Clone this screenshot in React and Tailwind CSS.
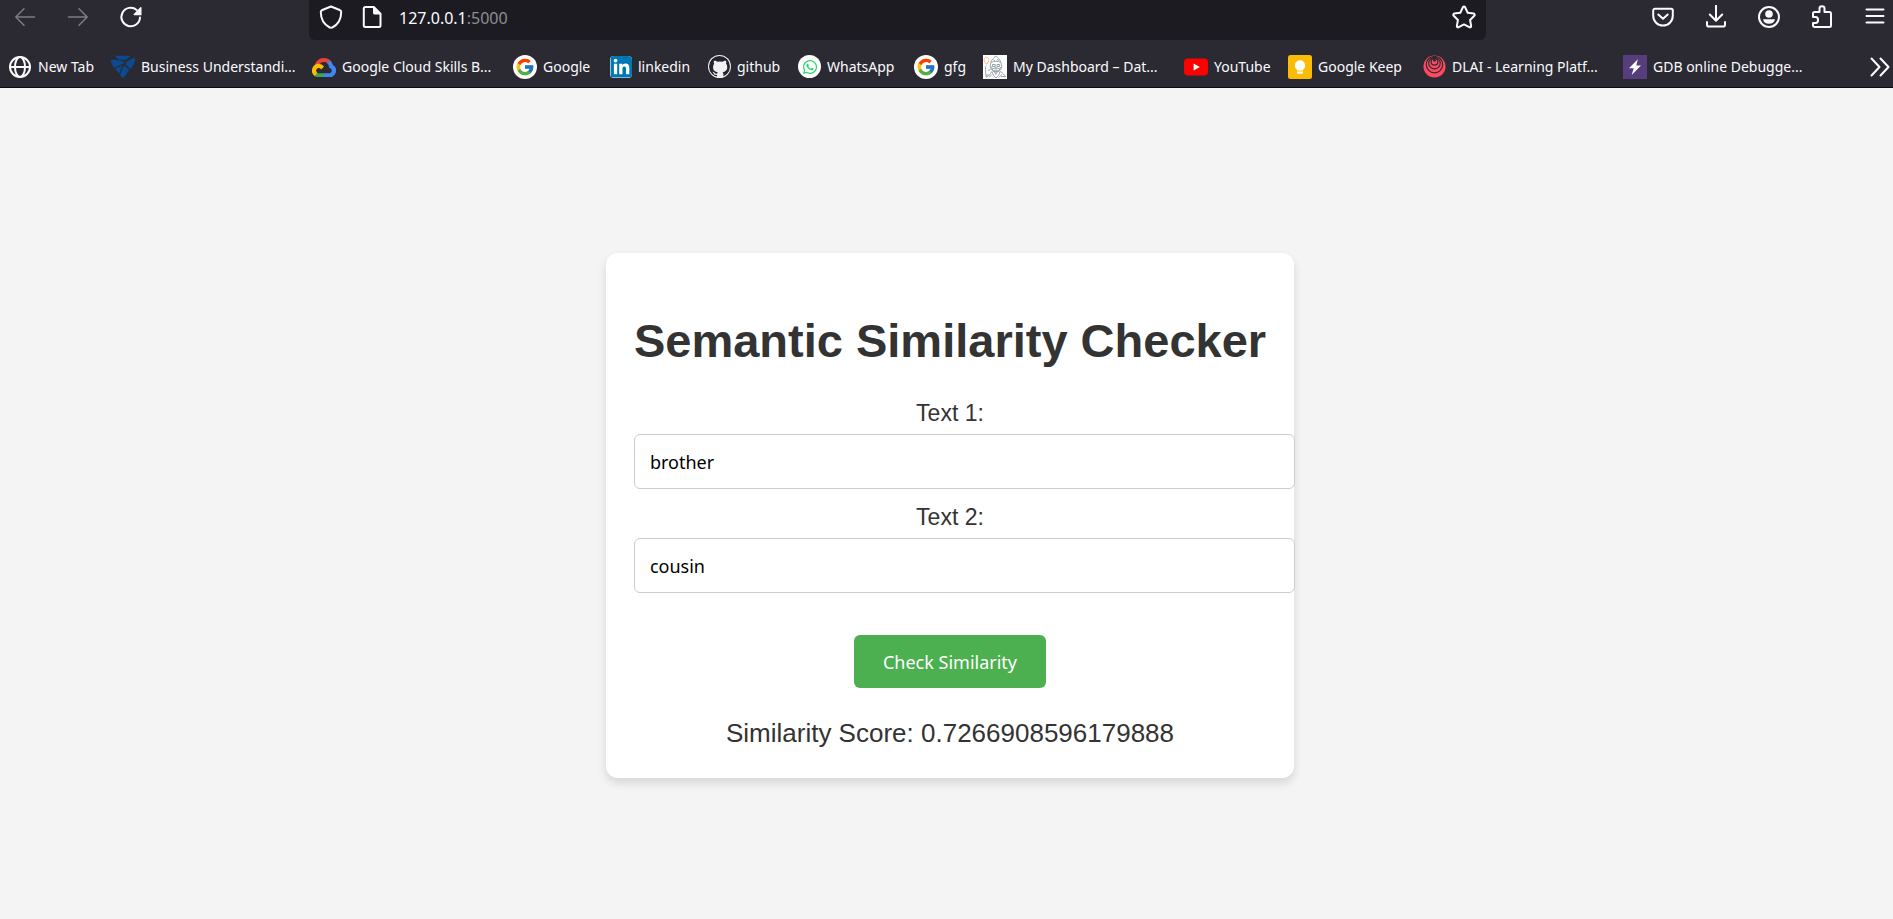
import { useState } from "react";
import { FcGoogle } from "react-icons/fc";
import { FaLinkedin, FaWhatsapp } from "react-icons/fa";

const line = {
  fill: "none",
  stroke: "currentColor",
  strokeWidth: 2,
  strokeLinecap: "round",
  strokeLinejoin: "round",
};

function Icon({ children, className = "size-6" }) {
  return (
    <svg viewBox="0 0 24 24" className={`block shrink-0 ${className}`} aria-hidden="true" {...line}>
      {children}
    </svg>
  );
}

const BackIcon = () => (
  <Icon>
    <path strokeWidth="1.5" d="M21.5 12H3M11 3.7 2.8 12l8.2 8.3" />
  </Icon>
);

const ForwardIcon = () => (
  <Icon>
    <path strokeWidth="1.5" d="M2.5 12H21M13 3.7 21.2 12 13 20.300" />
  </Icon>
);

const ReloadIcon = () => (
  <Icon>
    <path d="M21 12.500a9.300 9.300 0 1 1-3.300-7.600" />
    <path fill="currentColor" stroke="none" d="M22.500 2.800v7.400h-7.200c-.7 0-1-.8-.5-1.200l6.500-6.700c.500-.5 1.200-.2 1.200.5z" />
  </Icon>
);

const ShieldIcon = () => (
  <Icon>
    <path d="M12 1.500 3.300 5c-1 .4-1.500 1-1.500 2 0 6.800 3.200 12.500 8.900 15.500.9.500 1.700.5 2.600 0C19 19.500 22.200 13.800 22.200 7c0-1-.5-1.600-1.500-2z" />
  </Icon>
);

const PageIcon = () => (
  <Icon>
    <path d="M5.300 2h8.500L20.500 8.700v11.800c0 .8-.7 1.500-1.500 1.500H5.300c-.8 0-1.500-.7-1.500-1.500v-17C3.800 2.700 4.500 2 5.300 2z" />
    <path fill="currentColor" stroke="none" d="M13 1.500 21 9.500h-6.500c-.8 0-1.500-.7-1.500-1.500z" />
  </Icon>
);

const StarIcon = () => (
  <Icon>
    <path d="M10.900 2.300c.5-1 1.700-1 2.200 0l2.600 5.400 5.900.9c1.100.2 1.500 1.400.7 2.200L18.100 15l1 5.900c.2 1.100-.8 1.800-1.800 1.300L12 19.400l-5.300 2.800c-1 .5-2-.2-1.800-1.300l1-5.900-4.200-4.200c-.8-.8-.4-2 .7-2.200l5.900-.9z" />
  </Icon>
);

const PocketIcon = () => (
  <Icon>
    <path d="M4 3.800h16c1 0 1.800.8 1.800 1.800v5.200a9.800 9.800 0 0 1-19.600 0V5.600c0-1 .8-1.800 1.800-1.800z" />
    <path d="M7.300 9.500 12 13.800l4.700-4.300" />
  </Icon>
);

const DownloadIcon = () => (
  <Icon>
    <path d="M12 .8v14.500M5.800 9.500l6.200 6.200 6.200-6.200M3 17v2.700c0 1 .8 1.800 1.800 1.800h14.400c1 0 1.800-.8 1.800-1.800V17" />
  </Icon>
);

const AccountIcon = () => (
  <Icon>
    <circle cx="12" cy="12" r="10" />
    <circle cx="12" cy="9" r="3.800" fill="currentColor" stroke="none" />
    <path fill="currentColor" stroke="none" d="M6 14.300h12c-.5 3-2.800 4.500-6 4.500s-5.500-1.500-6-4.500z" />
  </Icon>
);

const ExtensionsIcon = () => (
  <Icon>
    <path d="M3 12V8.500C3 7.700 3.700 7 4.500 7h5V3.500c0-3 5-3 5 0V7h5c.8 0 1.500.7 1.500 1.500v12c0 .8-.7 1.500-1.500 1.500h-15c-.8 0-1.500-.7-1.500-1.500V18h2.500c3.400 0 3.400-6 0-6z" />
  </Icon>
);

const MenuIcon = () => (
  <Icon>
    <path d="M3.500 4.500h17M3.500 11h17M3.500 17.500h17" />
  </Icon>
);

const OverflowIcon = () => (
  <Icon>
    <path d="m3.500 3.500 8 8.500-8 8.500M12.500 3.500l8 8.500-8 8.500" />
  </Icon>
);

const GlobeIcon = () => (
  <Icon>
    <circle cx="12" cy="12" r="10" />
    <ellipse cx="12" cy="12" rx="5" ry="10" />
    <path d="M2 12h20" />
  </Icon>
);

const ShardsIcon = () => (
  <svg viewBox="0 0 24 24" className="block size-6 shrink-0" fill="#0b4a8f" aria-hidden="true">
    <path d="M4 .8h16l-5.500 3.900H9C6.600 4.200 5 2.600 4 .8z" />
    <path d="M0 5C5 4.300 10 5 14 7.600L3.500 13C1.200 10.500.2 8 0 5z" />
    <path d="M15.500 6.700 22.500 3c1.300-.5 1.700 0 1.500 1.200-.4 3.800-1.800 6.800-4 9.300-.4.300-.7.300-1 0l-4.700-4.200z" />
    <path d="m4.200 14 7.300-3.700-3.300 8.500z" />
    <path d="m13 10.300 5.300 4.700-5 7c-.8 1-1.800 1-2.600 0l-1.700-2.200z" />
  </svg>
);

const GoogleCloudIcon = () => (
  <svg viewBox="0 0 24 20" className="block h-5 w-6 shrink-0" aria-hidden="true">
    <path fill="#ea4335" d="M15.200 6.300h.8l2.100-2.100.1-.9A9.500 9.500 0 0 0 2.800 7.900l.7-.1 4.200-.7.300-.3a5.200 5.200 0 0 1 7.200-.5z" />
    <path fill="#4285f4" d="M21 7.900a9.500 9.500 0 0 0-2.900-4.600l-3 3a5.200 5.200 0 0 1 2 4.200v.5a2.600 2.600 0 0 1 0 5.200H12l-.5.600v3.100l.5.500h5.200A6.800 6.800 0 0 0 21 7.900z" />
    <path fill="#34a853" d="M6.700 20.400H12v-4.200H6.700a2.600 2.600 0 0 1-1.100-.200l-.8.200-2.100 2.100-.2.700a6.800 6.800 0 0 0 4.200 1.400z" />
    <path fill="#fbbc04" d="M6.700 6.800a6.800 6.800 0 0 0-4.100 12.200l3-3a2.600 2.600 0 1 1 3.500-3.500l3-3a6.800 6.800 0 0 0-5.400-2.700z" />
  </svg>
);

const GoogleIcon = () => (
  <span className="flex size-6 shrink-0 items-center justify-center rounded-full bg-white">
    <FcGoogle size={20} />
  </span>
);

const LinkedinIcon = () => (
  <span className="flex size-[22px] shrink-0 items-center justify-center overflow-hidden rounded-sm bg-white text-[#0077b5]">
    <FaLinkedin size={25} className="shrink-0" />
  </span>
);

const GithubIcon = () => (
  <span className="flex size-[23px] shrink-0 items-center justify-center rounded-full bg-[#24222a] text-[#f0f0f4] ring-1 ring-[#f0f0f4] ring-inset">
    <svg viewBox="0 0 24 24" className="block size-[22px]" fill="currentColor" aria-hidden="true">
      <path d="M5.500 5.200c1.500-.2 2.800.5 3.800 1.200a11 11 0 0 1 5.400 0c1-.7 2.300-1.400 3.800-1.200.5 1.200.5 2.300.1 3.200 1 1.200 1.400 2.400 1.300 4-.2 3.700-2.300 5-5 5.400.6.700.8 1.500.8 2.500v2.900H8.800v-2.500c-2.700.3-3.400-1-4-2.200-.3-.5-.7-.9-1.200-1.200 2.200-.3 2.600 2 3.800 2.100.6.100 1.200 0 1.600-.2.100-.6.300-1 .6-1.400-2.900-.4-5.100-1.700-5.200-5.400 0-1.600.4-2.800 1.200-4-.4-.9-.6-2-.1-3.200z" />
    </svg>
  </span>
);

const WhatsappIcon = () => (
  <span className="flex size-[23px] shrink-0 items-center justify-center rounded-full bg-white text-[#25d366]">
    <FaWhatsapp size={16} />
  </span>
);

const SketchIcon = () => (
  <svg viewBox="0 0 24 24" className="block size-6 shrink-0" fill="none" stroke="#8d9ba3" strokeWidth="0.900" aria-hidden="true">
    <path fill="#fff" stroke="none" d="M0 0h24v24H0z" />
    <path stroke="#f0b878" d="M3.500 8.500h-1L1.200 5.600a2.400 2.400 0 1 1 4.500 0L4.500 8.500zM2.700 10h1.500" />
    <path d="M8 7c.5-3 3-3.200 4.500-6 2.500 1.800 4.500 3.200 5.200 6.200l1.200 4c-.3 3-2 5-5.800 5.200-3.600-.2-5.500-2-5.900-5.200z" />
    <path d="M8.200 7.200c3-1.200 6.200-1.200 9.500 0M9.500 9.500h2.700v2H9.500zM14 9.500h2.700v2H14zM12.500 12v1.500l1.300.3M9.500 14c2-1.300 5-1.500 7.200 0M11 15.500l1.800 4 2.200-4" />
    <path d="M8.500 11.500l1 3.500 1.500 2M17.500 12l-1 3-1.500 2M12 14.500v3M13.800 14.500v3M10.500 5l1.500 1M14.500 4l1 2" />
    <path d="M2.500 11.500c.5 4-.6 7.500 1 10.500 2.200 0 3.500-3 5.300-5.500 1 3.500 2.700 5 4.200 6.500 1.500-1.500 3.400-3 4-6.500 2.500 1.200 4.300 3 5.500 5.500M6 22.500l3-3M15.500 22.500l3.500-3M5 15.500l2.500-1M3 20h3M18 21.500h4.500" />
  </svg>
);

const YoutubeIcon = () => (
  <svg viewBox="0 0 24 24" className="block size-6 shrink-0" aria-hidden="true">
    <rect x="0" y="3.500" width="24" height="17" rx="4" fill="#f00" />
    <path fill="#fff" d="m9.600 8.400 6.200 3.600-6.200 3.600z" />
  </svg>
);

const KeepIcon = () => (
  <svg viewBox="0 0 24 24" className="block size-6 shrink-0" aria-hidden="true">
    <rect width="24" height="24" rx="2.500" fill="#fbbc04" />
    <path fill="#fff" d="M9 14.800A5.200 5.200 0 1 1 15 14.800v.7H9zM9.200 16.600h5.600v2.200H9.200z" />
  </svg>
);

const RingsIcon = () => (
  <svg viewBox="0 0 24 24" className="block size-[23px] shrink-0" fill="none" aria-hidden="true">
    <circle cx="12" cy="12" r="11.500" fill="#fd4a61" />
    <g stroke="#2b2a33" strokeWidth="1.200">
      <circle cx="12" cy="10" r="8.600" />
      <circle cx="12" cy="8.500" r="6" />
      <circle cx="12" cy="7" r="3.500" />
    </g>
    <circle cx="12" cy="5.500" r="1.500" fill="#2b2a33" />
  </svg>
);

const BoltIcon = () => (
  <svg viewBox="0 0 24 24" className="block size-6 shrink-0" aria-hidden="true">
    <path fill="#563d7c" d="M0 0h24v24H0z" />
    <path fill="#fff" d="m14.800 4.200-8.800 9h4.700L8.700 20l9.300-9.500h-4.700z" />
  </svg>
);

const bookmarks = [
  { label: "New Tab", icon: GlobeIcon, width: "w-[103px]" },
  { label: "Business Understandi...", icon: ShardsIcon, width: "w-[201px]" },
  { label: "Google Cloud Skills B...", icon: GoogleCloudIcon, width: "w-[201px]" },
  { label: "Google", icon: GoogleIcon, width: "w-[97px]" },
  { label: "linkedin", icon: LinkedinIcon, width: "w-[98px]" },
  { label: "github", icon: GithubIcon, width: "w-[90px]" },
  { label: "WhatsApp", icon: WhatsappIcon, width: "w-[116px]" },
  { label: "gfg", icon: GoogleIcon, width: "w-[69px]" },
  { label: "My Dashboard – Dat...", icon: SketchIcon, width: "w-[201px]" },
  { label: "YouTube", icon: YoutubeIcon, width: "w-[104px]" },
  { label: "Google Keep", icon: KeepIcon, width: "w-[135px]" },
  { label: "DLAI - Learning Platf...", icon: RingsIcon, width: "w-[200px]" },
  { label: "GDB online Debugge...", icon: BoltIcon, width: "w-[200px]" },
];

const actions = [
  { label: "Save to Pocket", icon: PocketIcon },
  { label: "Downloads", icon: DownloadIcon },
  { label: "Account", icon: AccountIcon },
  { label: "Extensions", icon: ExtensionsIcon },
  { label: "Open application menu", icon: MenuIcon },
];

function BrowserBar() {
  return (
    <header className="border-b border-[#0c0c0d] bg-[#2b2a33] font-['Noto_Sans',sans-serif] text-[#fbfbfe]">
      <div className="flex h-10 items-start justify-between">
        <nav aria-label="History" className="flex w-[309px] shrink-0 gap-[29px] pt-[5px] pl-[13px]">
          <button type="button" aria-label="Back" className="text-[#7d7c83]"><BackIcon /></button>
          <button type="button" aria-label="Forward" className="text-[#7d7c83]"><ForwardIcon /></button>
          <button type="button" aria-label="Reload"><ReloadIcon /></button>
        </nav>
        <div className="flex h-10 flex-1 items-start rounded-b-md bg-[#1c1b22] px-[10px] pt-[5px]">
          <button type="button" aria-label="Tracking protection"><ShieldIcon /></button>
          <button type="button" aria-label="Site information" className="ml-[17px]"><PageIcon /></button>
          <p className="ml-[15px] flex-1 text-base leading-[26px]">
            127.0.0.1<span className="text-[#8f8e94]">:5000</span>
          </p>
          <button type="button" aria-label="Bookmark this page"><StarIcon /></button>
        </div>
        <div className="flex w-[407px] shrink-0 justify-end gap-[29px] pt-[5px] pr-[6px]">
          {actions.map(({ label, icon: Glyph }) => (
            <button key={label} type="button" aria-label={label}><Glyph /></button>
          ))}
        </div>
      </div>
      <nav aria-label="Bookmarks" className="flex h-[47px] items-center pt-[6px] pr-px pl-2">
        {bookmarks.map(({ label, icon: Glyph, width }) => (
          <a key={label} href="#" className={`flex shrink-0 items-center gap-[6px] text-sm whitespace-nowrap ${width}`}>
            <Glyph />
            {label}
          </a>
        ))}
        <button type="button" aria-label="More bookmarks" className="ml-auto"><OverflowIcon /></button>
      </nav>
    </header>
  );
}

function Field({ id, label, value, onChange }) {
  return (
    <div className="mb-[14px]">
      <label htmlFor={id} className="block text-[23px] leading-7">{label}</label>
      <input
        id={id}
        type="text"
        value={value}
        onChange={(event) => onChange(event.target.value)}
        className="mt-[7px] block h-[55px] w-[calc(100%+29px)] rounded-md border border-[#ccc] bg-white px-[15px] font-['Noto_Sans',sans-serif] text-lg text-black outline-none"
      />
    </div>
  );
}

export default function App() {
  const [first, setFirst] = useState("brother");
  const [second, setSecond] = useState("cousin");

  return (
    <div className="flex min-h-screen flex-col bg-[#f4f4f4]">
      <BrowserBar />
      <main className="flex flex-1 items-center justify-center pt-6 pl-[7px] font-['Liberation_Sans',Arial,sans-serif] text-[#333]">
        <section className="rounded-xl bg-white px-[28px] pt-[60px] pb-[29px] text-center shadow-[0_5px_10px_rgba(0,0,0,0.12)]">
          <h1 className="text-[47px] leading-[55px] font-bold">Semantic Similarity Checker</h1>
          <form className="mt-[31px]" onSubmit={(event) => event.preventDefault()}>
            <Field id="text1" label="Text 1:" value={first} onChange={setFirst} />
            <Field id="text2" label="Text 2:" value={second} onChange={setSecond} />
            <button
              type="submit"
              className="mt-[28px] h-[53px] rounded-md bg-[#4caf50] px-[29px] font-['Noto_Sans',sans-serif] text-lg text-white"
            >
              Check Similarity
            </button>
          </form>
          <p className="mt-[30px] text-[26px] leading-[31px]">Similarity Score: 0.7266908596179888</p>
        </section>
      </main>
    </div>
  );
}
